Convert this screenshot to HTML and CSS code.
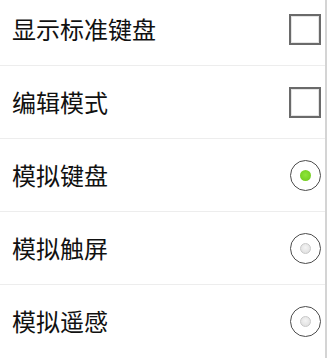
FILE: index.html
```html
<!DOCTYPE html>
<html>
<head>
<meta charset="utf-8">
<link rel="stylesheet" href="styles.css">
</head>
<body>
<div class="page">
  <ul class="list">
    <li class="row"><span class="label">显示标准键盘</span><span class="check"></span></li>
    <li class="row"><span class="label">编辑模式</span><span class="check"></span></li>
    <li class="row"><span class="label">模拟键盘</span><span class="radio"><span class="dot on"></span></span></li>
    <li class="row"><span class="label">模拟触屏</span><span class="radio"><span class="dot"></span></span></li>
    <li class="row"><span class="label">模拟遥感</span><span class="radio"><span class="dot"></span></span></li>
  </ul>
</div>
</body>
</html>
```
FILE: styles.css
```css
html, body {
  margin: 0;
  padding: 0;
  background: #fff;
  overflow: hidden;
}
.page {
  width: 325px;
  height: 358px;
  border-right: 2px solid #d4d4d4;
  overflow: hidden;
  font-family: "Noto Sans CJK SC", "Noto Sans", sans-serif;
}
.list {
  list-style: none;
  margin: -7px 0 0 0;
  padding: 0;
}
.row {
  height: 72px;
  border-bottom: 1px solid #ededed;
  display: flex;
  align-items: center;
  justify-content: space-between;
  padding: 0 4px 0 12px;
}
.row:last-child {
  border-bottom-color: transparent;
}
.label {
  font-size: 24px;
  color: #111;
  line-height: 1;
}
.check {
  width: 28px;
  height: 27px;
  border: 2px solid #6a6a6a;
  box-shadow: inset 0 0 0 1px #e4e4e4;
  background: #fff;
}
.radio {
  width: 29px;
  height: 29px;
  border: 1.5px solid #4c4c4c;
  border-radius: 50%;
  display: flex;
  align-items: center;
  justify-content: center;
  background: #fff;
}
.dot {
  width: 9px;
  height: 9px;
  border-radius: 50%;
  border: 1px solid #c8c8c8;
  background: radial-gradient(circle at 50% 40%, #f4f4f4, #dcdcdc);
}
.dot.on {
  width: 11px;
  height: 11px;
  border: none;
  background: radial-gradient(circle at 50% 45%, #8ee63a, #6cc61a);
}
```
